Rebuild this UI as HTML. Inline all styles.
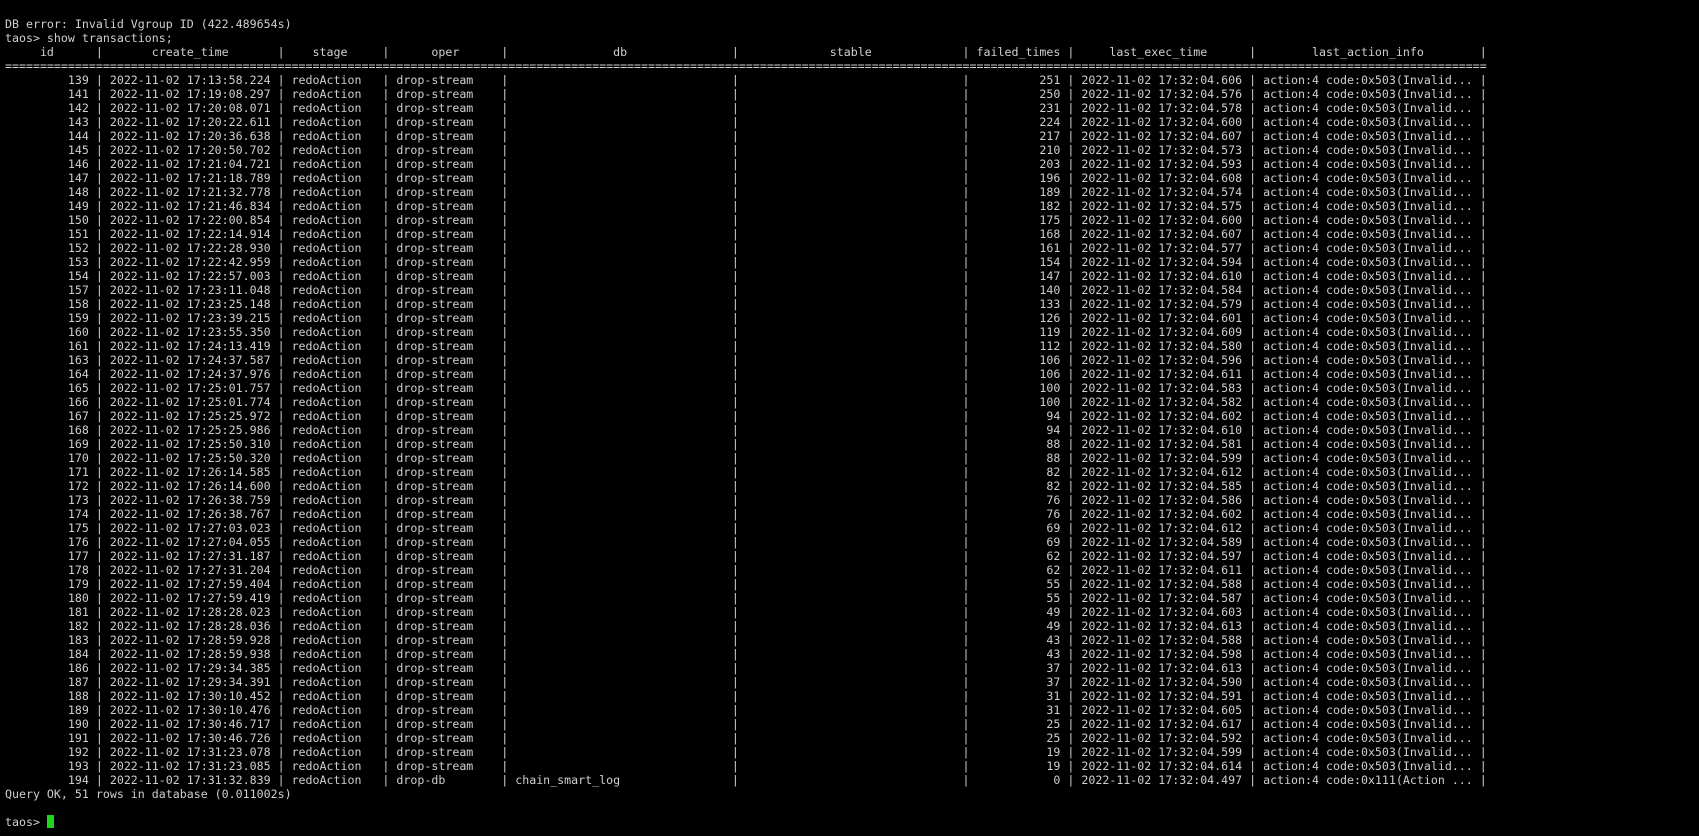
<!DOCTYPE html>
<html><head><meta charset="utf-8"><style>
html,body{margin:0;padding:0;background:#000;width:1699px;height:836px;overflow:hidden}
pre{position:absolute;left:5px;top:17px;margin:0;font-family:"DejaVu Sans Mono","Liberation Mono",monospace;font-size:11.62px;line-height:14px;color:#cfcfcf;white-space:pre}
.cur{display:inline-block;width:7px;height:13px;background:#1fd31f;vertical-align:-2px}
</style></head><body><pre>DB error: Invalid Vgroup ID (422.489654s)
taos&gt; show transactions;
     id      |       create_time       |    stage     |      oper      |               db               |             stable             | failed_times |     last_exec_time      |        last_action_info        |
====================================================================================================================================================================================================================
         139 | 2022-11-02 17:13:58.224 | redoAction   | drop-stream    |                                |                                |          251 | 2022-11-02 17:32:04.606 | action:4 code:0x503(Invalid... |
         141 | 2022-11-02 17:19:08.297 | redoAction   | drop-stream    |                                |                                |          250 | 2022-11-02 17:32:04.576 | action:4 code:0x503(Invalid... |
         142 | 2022-11-02 17:20:08.071 | redoAction   | drop-stream    |                                |                                |          231 | 2022-11-02 17:32:04.578 | action:4 code:0x503(Invalid... |
         143 | 2022-11-02 17:20:22.611 | redoAction   | drop-stream    |                                |                                |          224 | 2022-11-02 17:32:04.600 | action:4 code:0x503(Invalid... |
         144 | 2022-11-02 17:20:36.638 | redoAction   | drop-stream    |                                |                                |          217 | 2022-11-02 17:32:04.607 | action:4 code:0x503(Invalid... |
         145 | 2022-11-02 17:20:50.702 | redoAction   | drop-stream    |                                |                                |          210 | 2022-11-02 17:32:04.573 | action:4 code:0x503(Invalid... |
         146 | 2022-11-02 17:21:04.721 | redoAction   | drop-stream    |                                |                                |          203 | 2022-11-02 17:32:04.593 | action:4 code:0x503(Invalid... |
         147 | 2022-11-02 17:21:18.789 | redoAction   | drop-stream    |                                |                                |          196 | 2022-11-02 17:32:04.608 | action:4 code:0x503(Invalid... |
         148 | 2022-11-02 17:21:32.778 | redoAction   | drop-stream    |                                |                                |          189 | 2022-11-02 17:32:04.574 | action:4 code:0x503(Invalid... |
         149 | 2022-11-02 17:21:46.834 | redoAction   | drop-stream    |                                |                                |          182 | 2022-11-02 17:32:04.575 | action:4 code:0x503(Invalid... |
         150 | 2022-11-02 17:22:00.854 | redoAction   | drop-stream    |                                |                                |          175 | 2022-11-02 17:32:04.600 | action:4 code:0x503(Invalid... |
         151 | 2022-11-02 17:22:14.914 | redoAction   | drop-stream    |                                |                                |          168 | 2022-11-02 17:32:04.607 | action:4 code:0x503(Invalid... |
         152 | 2022-11-02 17:22:28.930 | redoAction   | drop-stream    |                                |                                |          161 | 2022-11-02 17:32:04.577 | action:4 code:0x503(Invalid... |
         153 | 2022-11-02 17:22:42.959 | redoAction   | drop-stream    |                                |                                |          154 | 2022-11-02 17:32:04.594 | action:4 code:0x503(Invalid... |
         154 | 2022-11-02 17:22:57.003 | redoAction   | drop-stream    |                                |                                |          147 | 2022-11-02 17:32:04.610 | action:4 code:0x503(Invalid... |
         157 | 2022-11-02 17:23:11.048 | redoAction   | drop-stream    |                                |                                |          140 | 2022-11-02 17:32:04.584 | action:4 code:0x503(Invalid... |
         158 | 2022-11-02 17:23:25.148 | redoAction   | drop-stream    |                                |                                |          133 | 2022-11-02 17:32:04.579 | action:4 code:0x503(Invalid... |
         159 | 2022-11-02 17:23:39.215 | redoAction   | drop-stream    |                                |                                |          126 | 2022-11-02 17:32:04.601 | action:4 code:0x503(Invalid... |
         160 | 2022-11-02 17:23:55.350 | redoAction   | drop-stream    |                                |                                |          119 | 2022-11-02 17:32:04.609 | action:4 code:0x503(Invalid... |
         161 | 2022-11-02 17:24:13.419 | redoAction   | drop-stream    |                                |                                |          112 | 2022-11-02 17:32:04.580 | action:4 code:0x503(Invalid... |
         163 | 2022-11-02 17:24:37.587 | redoAction   | drop-stream    |                                |                                |          106 | 2022-11-02 17:32:04.596 | action:4 code:0x503(Invalid... |
         164 | 2022-11-02 17:24:37.976 | redoAction   | drop-stream    |                                |                                |          106 | 2022-11-02 17:32:04.611 | action:4 code:0x503(Invalid... |
         165 | 2022-11-02 17:25:01.757 | redoAction   | drop-stream    |                                |                                |          100 | 2022-11-02 17:32:04.583 | action:4 code:0x503(Invalid... |
         166 | 2022-11-02 17:25:01.774 | redoAction   | drop-stream    |                                |                                |          100 | 2022-11-02 17:32:04.582 | action:4 code:0x503(Invalid... |
         167 | 2022-11-02 17:25:25.972 | redoAction   | drop-stream    |                                |                                |           94 | 2022-11-02 17:32:04.602 | action:4 code:0x503(Invalid... |
         168 | 2022-11-02 17:25:25.986 | redoAction   | drop-stream    |                                |                                |           94 | 2022-11-02 17:32:04.610 | action:4 code:0x503(Invalid... |
         169 | 2022-11-02 17:25:50.310 | redoAction   | drop-stream    |                                |                                |           88 | 2022-11-02 17:32:04.581 | action:4 code:0x503(Invalid... |
         170 | 2022-11-02 17:25:50.320 | redoAction   | drop-stream    |                                |                                |           88 | 2022-11-02 17:32:04.599 | action:4 code:0x503(Invalid... |
         171 | 2022-11-02 17:26:14.585 | redoAction   | drop-stream    |                                |                                |           82 | 2022-11-02 17:32:04.612 | action:4 code:0x503(Invalid... |
         172 | 2022-11-02 17:26:14.600 | redoAction   | drop-stream    |                                |                                |           82 | 2022-11-02 17:32:04.585 | action:4 code:0x503(Invalid... |
         173 | 2022-11-02 17:26:38.759 | redoAction   | drop-stream    |                                |                                |           76 | 2022-11-02 17:32:04.586 | action:4 code:0x503(Invalid... |
         174 | 2022-11-02 17:26:38.767 | redoAction   | drop-stream    |                                |                                |           76 | 2022-11-02 17:32:04.602 | action:4 code:0x503(Invalid... |
         175 | 2022-11-02 17:27:03.023 | redoAction   | drop-stream    |                                |                                |           69 | 2022-11-02 17:32:04.612 | action:4 code:0x503(Invalid... |
         176 | 2022-11-02 17:27:04.055 | redoAction   | drop-stream    |                                |                                |           69 | 2022-11-02 17:32:04.589 | action:4 code:0x503(Invalid... |
         177 | 2022-11-02 17:27:31.187 | redoAction   | drop-stream    |                                |                                |           62 | 2022-11-02 17:32:04.597 | action:4 code:0x503(Invalid... |
         178 | 2022-11-02 17:27:31.204 | redoAction   | drop-stream    |                                |                                |           62 | 2022-11-02 17:32:04.611 | action:4 code:0x503(Invalid... |
         179 | 2022-11-02 17:27:59.404 | redoAction   | drop-stream    |                                |                                |           55 | 2022-11-02 17:32:04.588 | action:4 code:0x503(Invalid... |
         180 | 2022-11-02 17:27:59.419 | redoAction   | drop-stream    |                                |                                |           55 | 2022-11-02 17:32:04.587 | action:4 code:0x503(Invalid... |
         181 | 2022-11-02 17:28:28.023 | redoAction   | drop-stream    |                                |                                |           49 | 2022-11-02 17:32:04.603 | action:4 code:0x503(Invalid... |
         182 | 2022-11-02 17:28:28.036 | redoAction   | drop-stream    |                                |                                |           49 | 2022-11-02 17:32:04.613 | action:4 code:0x503(Invalid... |
         183 | 2022-11-02 17:28:59.928 | redoAction   | drop-stream    |                                |                                |           43 | 2022-11-02 17:32:04.588 | action:4 code:0x503(Invalid... |
         184 | 2022-11-02 17:28:59.938 | redoAction   | drop-stream    |                                |                                |           43 | 2022-11-02 17:32:04.598 | action:4 code:0x503(Invalid... |
         186 | 2022-11-02 17:29:34.385 | redoAction   | drop-stream    |                                |                                |           37 | 2022-11-02 17:32:04.613 | action:4 code:0x503(Invalid... |
         187 | 2022-11-02 17:29:34.391 | redoAction   | drop-stream    |                                |                                |           37 | 2022-11-02 17:32:04.590 | action:4 code:0x503(Invalid... |
         188 | 2022-11-02 17:30:10.452 | redoAction   | drop-stream    |                                |                                |           31 | 2022-11-02 17:32:04.591 | action:4 code:0x503(Invalid... |
         189 | 2022-11-02 17:30:10.476 | redoAction   | drop-stream    |                                |                                |           31 | 2022-11-02 17:32:04.605 | action:4 code:0x503(Invalid... |
         190 | 2022-11-02 17:30:46.717 | redoAction   | drop-stream    |                                |                                |           25 | 2022-11-02 17:32:04.617 | action:4 code:0x503(Invalid... |
         191 | 2022-11-02 17:30:46.726 | redoAction   | drop-stream    |                                |                                |           25 | 2022-11-02 17:32:04.592 | action:4 code:0x503(Invalid... |
         192 | 2022-11-02 17:31:23.078 | redoAction   | drop-stream    |                                |                                |           19 | 2022-11-02 17:32:04.599 | action:4 code:0x503(Invalid... |
         193 | 2022-11-02 17:31:23.085 | redoAction   | drop-stream    |                                |                                |           19 | 2022-11-02 17:32:04.614 | action:4 code:0x503(Invalid... |
         194 | 2022-11-02 17:31:32.839 | redoAction   | drop-db        | chain_smart_log                |                                |            0 | 2022-11-02 17:32:04.497 | action:4 code:0x111(Action ... |
Query OK, 51 rows in database (0.011002s)

taos&gt; <span class="cur"></span></pre></body></html>
